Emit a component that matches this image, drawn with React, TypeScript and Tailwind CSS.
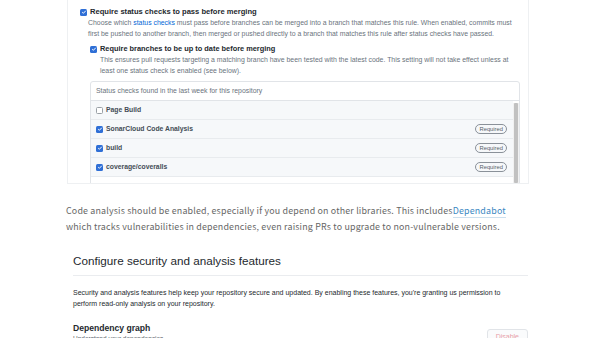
import React from 'react';

const Check = ({ on = true }: { on?: boolean }) =>
  on ? (
    <span className="flex h-[7px] w-[7px] shrink-0 items-center justify-center rounded-[1.5px] bg-[#2f6fd6]">
      <svg viewBox="0 0 8 8" className="h-[6px] w-[6px]">
        <path d="M1.6 4.2 3.2 5.7 6.4 2.3" fill="none" stroke="#fff" strokeWidth="1.3" />
      </svg>
    </span>
  ) : (
    <span className="h-[7px] w-[7px] shrink-0 rounded-[1.5px] border border-[#9aa0a6] bg-white" />
  );

const checks = [
  { name: 'Page Build', on: false },
  { name: 'SonarCloud Code Analysis', on: true },
  { name: 'build', on: true },
  { name: 'coverage/coveralls', on: true },
];

export default function App() {
  return (
    <div className="h-[338px] w-[600px] overflow-hidden bg-white font-['Liberation_Sans',Arial,sans-serif]">
      {/* screenshot of branch protection settings */}
      <div className="ml-[67px] h-[184px] w-[462px] overflow-hidden border-x border-b border-[#eef0f2] pl-[12px] pr-[8px] pt-[7px]">
        <div className="flex items-center gap-[3px]">
          <Check />
          <span className="text-[7.6px] font-bold leading-[10px] text-[#24292e]">Require status checks to pass before merging</span>
        </div>
        <p className="-mr-[4px] ml-[8px] text-[6.9px] leading-[11px] text-[#6a737d]">
          Choose which <span className="text-[#0366d6]">status checks</span> must pass before branches can be merged into a branch that matches this rule. When enabled, commits must first be pushed to another branch, then merged or pushed directly to a branch that matches this rule after status checks have passed.
        </p>
        <div className="ml-[10px] mt-[5px]">
          <div className="flex items-center gap-[3px]">
            <Check />
            <span className="text-[7.4px] font-bold leading-[10px] text-[#24292e]">Require branches to be up to date before merging</span>
          </div>
          <p className="-mr-[4px] ml-[10px] text-[6.9px] leading-[11px] text-[#6a737d]">
            This ensures pull requests targeting a matching branch have been tested with the latest code. This setting will not take effect unless at least one status check is enabled (see below).
          </p>
          <div className="mt-[5px] h-[120px] rounded-t-[3px] border border-[#e1e4e8]">
            <div className="flex h-[19px] items-center border-b border-[#e1e4e8] px-[5px] text-[6.9px] text-[#6a737d]">
              Status checks found in the last week for this repository
            </div>
            <div className="flex">
              <div className="flex-1">
                {checks.map((c) => (
                  <div key={c.name} className="flex h-[19px] items-center border-b border-[#e8ebee] bg-[#f6f8fa] pl-[5px] pr-[6px]">
                    <Check on={c.on} />
                    <span className="ml-[3px] flex-1 text-[6.8px] font-bold text-[#444d56]">{c.name}</span>
                    {c.on && (
                      <span className="rounded-full border border-[#8a9199] px-[3px] text-[5.8px] leading-[8px] text-[#586069]">Required</span>
                    )}
                  </div>
                ))}
              </div>
              <div className="mt-[2px] w-[6px] bg-[#f1f1f1]">
                <div className="mx-auto h-[80px] w-[4px] rounded-[1px] bg-[#c1c1c1]" />
              </div>
            </div>
          </div>
        </div>
      </div>

      <p className="ml-[66px] mt-[19px] w-[452px] font-['Noto_Sans_CJK_JP','Liberation_Sans',sans-serif] text-[8.9px] leading-[16px] tracking-[0.02em] text-[#666]">
        Code analysis should be enabled, especially if you depend on other libraries. This includes<span className="border-b border-[#cde0ee] text-[#3a87c2]">Dependabot</span> which tracks vulnerabilities in dependencies, even raising PRs to upgrade to non-vulnerable versions.
      </p>

      <div className="ml-[73px] mt-[18px] w-[455px]">
        <h2 className="border-b border-[#eaecef] pb-[6px] text-[11.7px] leading-[16px] text-[#24292e]">Configure security and analysis features</h2>
        <p className="mt-[11px] w-[438px] text-[7px] leading-[11px] text-[#24292e]">
          Security and analysis features help keep your repository secure and updated. By enabling these features, you're granting us permission to perform read-only analysis on your repository.
        </p>
        <div className="mt-[14px] flex items-start justify-between">
          <div>
            <div className="text-[8.6px] font-bold leading-[11px] text-[#24292e]">Dependency graph</div>
            <div className="text-[6.5px] leading-[10px] text-[#586069]">Understand your dependencies.</div>
          </div>
          <span className="mt-[6px] rounded-[3px] border border-[#e1e4e8] bg-[#fafbfc] px-[8px] py-[2px] text-[7px] text-[#e8a0a8]">Disable</span>
        </div>
      </div>
    </div>
  );
}
